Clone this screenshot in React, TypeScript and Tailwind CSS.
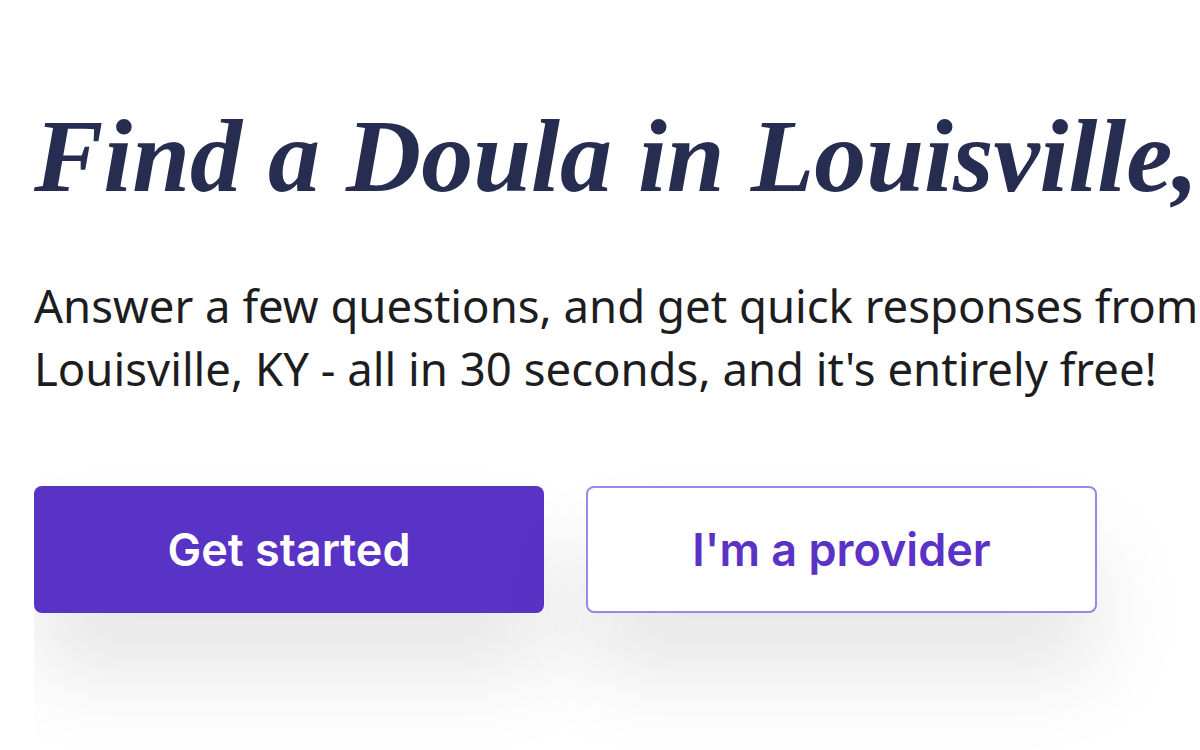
import React from 'react';

export default function App() {
  return (
    <div className="w-full h-[750px] overflow-hidden bg-white">
      <div className="w-[1700px] pl-[34px] pt-[96px]">
        {/* Hero heading */}
        <h1
          className="text-[104px] leading-[120px] font-bold italic text-[#262d50] whitespace-nowrap"
          style={{ fontFamily: '"Liberation Serif", serif' }}
        >
          Find a Doula in Louisville, KY
        </h1>

        {/* Intro copy */}
        <p
          className="mt-[58px] text-[45.5px] leading-[63px] text-[#1d1d1f] whitespace-nowrap"
          style={{ fontFamily: '"Noto Sans", sans-serif' }}
        >
          Answer a few questions, and get quick responses from the top doulas in
          <br />
          Louisville, KY - all in 30 seconds, and it's entirely free!
        </p>

        {/* Call to action buttons */}
        <div className="mt-[54px] overflow-hidden pt-[32px] pb-[240px]">
          <div className="flex gap-[42px]">
            <button
              className="w-[510px] h-[127px] rounded-[8px] bg-[#5933c6] text-white text-[45px] font-semibold shadow-[0_60px_90px_rgba(0,0,0,0.1)]"
              style={{ fontFamily: 'Inter, sans-serif' }}
            >
              Get started
            </button>
            <button
              className="w-[511px] h-[127px] rounded-[8px] bg-white border-2 border-[#9a88e4] text-[#5a33c6] text-[45px] font-semibold shadow-[0_60px_90px_rgba(0,0,0,0.1)]"
              style={{ fontFamily: 'Inter, sans-serif' }}
            >
              I'm a provider
            </button>
          </div>
        </div>
      </div>
    </div>
  );
}
